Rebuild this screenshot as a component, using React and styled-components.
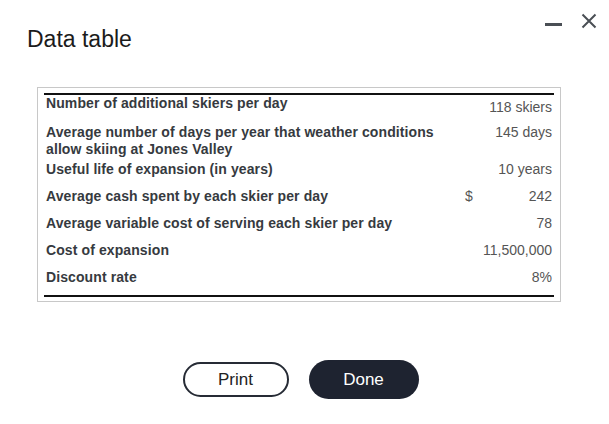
import React from 'react';
import styled, { createGlobalStyle } from 'styled-components';

const rows = [
  { label: 'Number of additional skiers per day', value: '118 skiers', pb: 8, vt: 4 },
  { label: 'Average number of days per year that weather conditions allow skiing at Jones Valley', value: '145 days', pb: 3 },
  { label: 'Useful life of expansion (in years)', value: '10 years' },
  { label: 'Average cash spent by each skier per day', value: '242', dollar: true },
  { label: 'Average variable cost of serving each skier per day', value: '78' },
  { label: 'Cost of expansion', value: '11,500,000' },
  { label: 'Discount rate', value: '8%', pb: 9 },
];

const App = () => {
  return (
    <>
      <GlobalStyle />
      <Dialog>
        <Header>
          <Title>Data table</Title>
          <Controls>
            <Minimize aria-label="minimize" />
            <CloseIcon width="16" height="16" viewBox="0 0 16 16" aria-label="close">
              <path d="M1.5 1.5 L14.5 14.5 M14.5 1.5 L1.5 14.5" />
            </CloseIcon>
          </Controls>
        </Header>

        <TableBox>
          <Table>
            {rows.map((r) => (
              <Row key={r.label} $pb={r.pb}>
                <Label>{r.label}</Label>
                <Dollar>{r.dollar ? '$' : ''}</Dollar>
                <Value $top={r.vt}>{r.value}</Value>
              </Row>
            ))}
          </Table>
        </TableBox>

        <Buttons>
          <PrintButton>Print</PrintButton>
          <DoneButton>Done</DoneButton>
        </Buttons>
      </Dialog>
    </>
  );
};

export default App;

const GlobalStyle = createGlobalStyle`
  body {
    margin: 0;
    background: #fff;
    font-family: 'Liberation Sans', Arial, sans-serif;
  }
`;

const Dialog = styled.div`
  width: 609px;
  height: 424px;
  display: flex;
  flex-direction: column;
  box-sizing: border-box;
`;

const Header = styled.header`
  display: flex;
  justify-content: space-between;
  align-items: flex-start;
  padding: 0 12px 0 27px;
`;

const Title = styled.h1`
  margin: 26px 0 0;
  font-size: 23px;
  line-height: 26px;
  font-weight: 400;
  color: #1b1b1b;
`;

const Controls = styled.div`
  display: flex;
  align-items: flex-start;
  gap: 19px;
  margin-top: 13px;
`;

const Minimize = styled.span`
  display: block;
  width: 17px;
  height: 3px;
  margin-top: 10px;
  background: #4a4f55;
`;

const CloseIcon = styled.svg`
  display: block;
  stroke: #4a4f55;
  stroke-width: 2;
  fill: none;
`;

const TableBox = styled.div`
  margin: 35px 0 0 37px;
  width: 524px;
  box-sizing: border-box;
  border: 1px solid #c8c8c8;
  padding: 5px 6px 4px;
`;

const Table = styled.div`
  border-top: 2px solid #111;
  border-bottom: 2px solid #111;
`;

const Row = styled.div`
  display: grid;
  grid-template-columns: 410px 20px 1fr;
  align-items: start;
  padding-bottom: ${(p) => (p.$pb ?? 10)}px;
  font-size: 14px;
  line-height: 17px;
`;

const Label = styled.div`
  padding-left: 2px;
  font-weight: 700;
  color: #363a40;
  letter-spacing: 0.1px;
`;

const Dollar = styled.div`
  padding-left: 11px;
  color: #555;
`;

const Value = styled.div`
  padding: ${(p) => p.$top ?? 0}px 2px 0 0;
  text-align: right;
  color: #555;
  white-space: nowrap;
`;

const Buttons = styled.div`
  display: flex;
  justify-content: center;
  align-items: center;
  gap: 20px;
  margin-top: 58px;
  padding-right: 8px;
`;

const PrintButton = styled.button`
  width: 106px;
  height: 35px;
  border: 2px solid #262b35;
  border-radius: 18px;
  background: #fff;
  color: #222;
  font-family: 'Liberation Sans', Arial, sans-serif;
  font-size: 17px;
  cursor: pointer;
`;

const DoneButton = styled.button`
  width: 110px;
  height: 39px;
  border: none;
  border-radius: 20px;
  background: #1e2330;
  color: #fff;
  font-family: 'Liberation Sans', Arial, sans-serif;
  font-size: 17px;
  cursor: pointer;
`;
